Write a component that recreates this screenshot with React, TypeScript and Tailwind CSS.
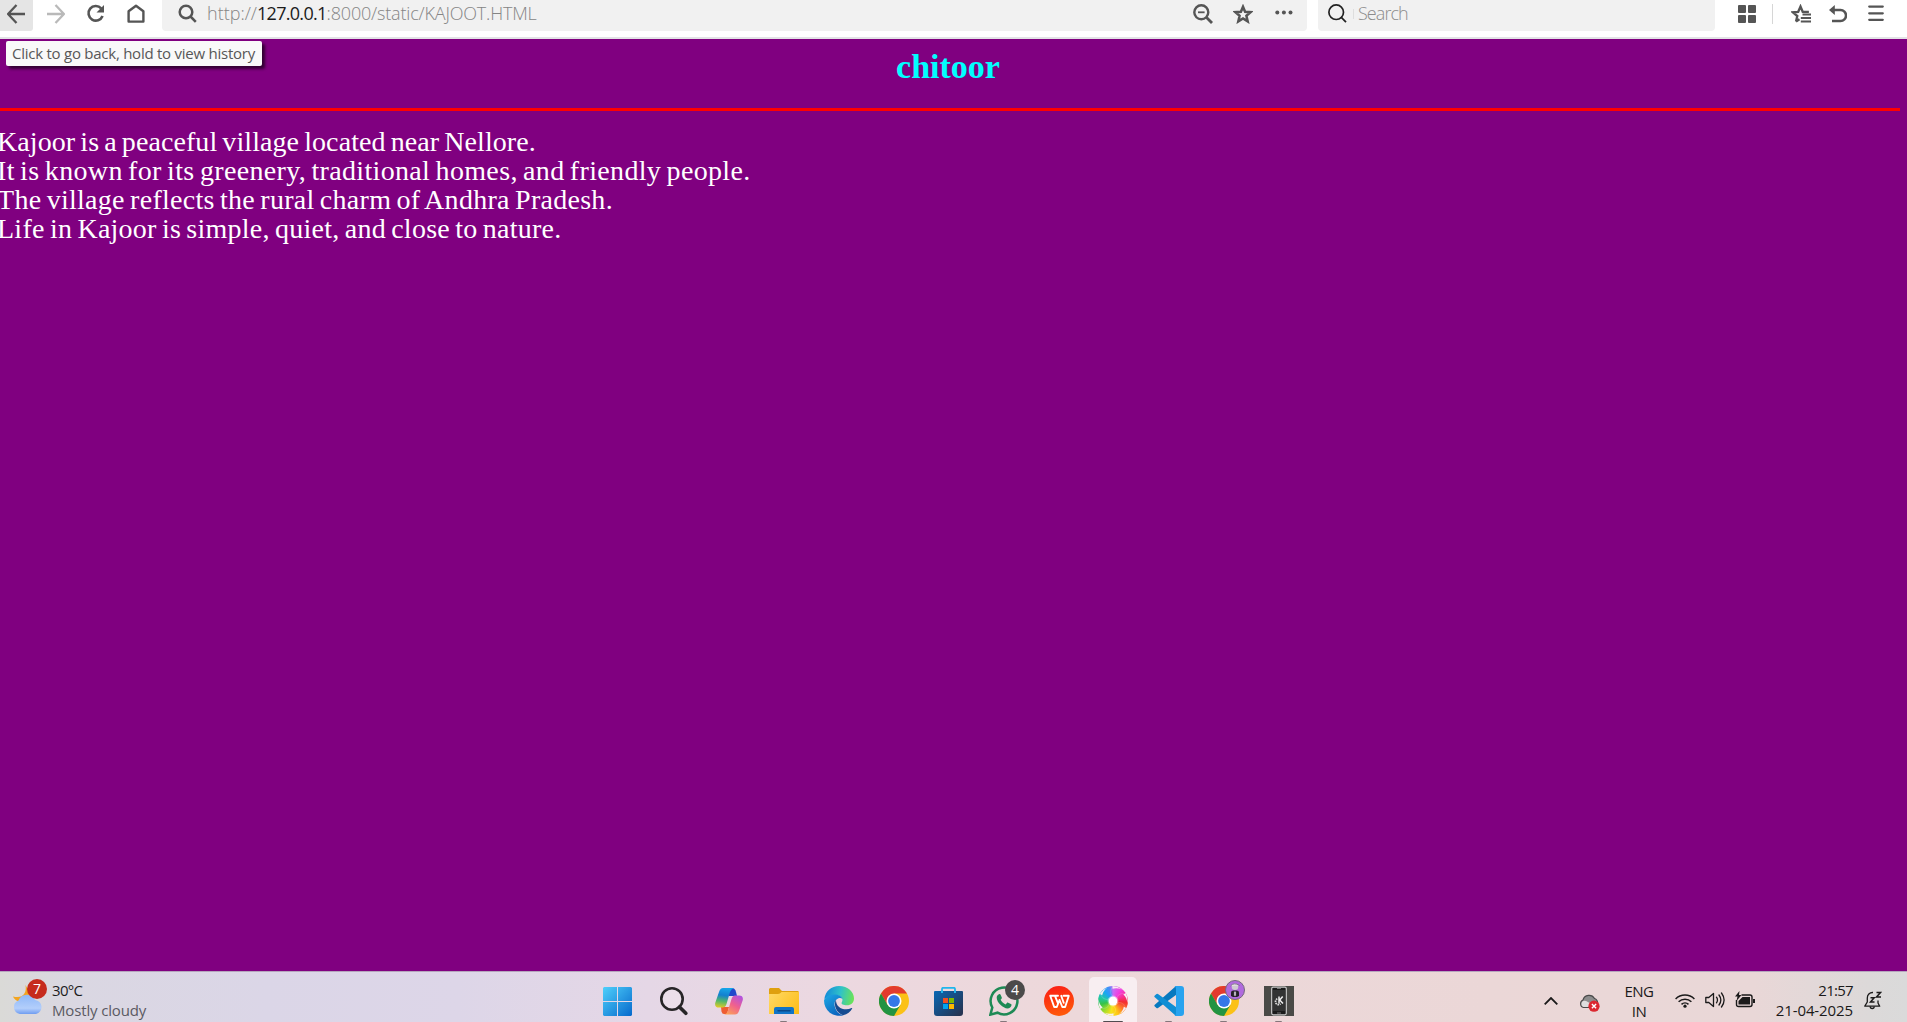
import type { ReactNode } from "react";

const line = { fill: "none", stroke: "currentColor" } as const;

function BackArrow({ className }: { className: string }) {
  return (
    <svg viewBox="0 0 18 20" className={className} {...line} strokeWidth="2.3">
      <path d="M9.5 1 1 10l8.5 9M1 10h17" />
    </svg>
  );
}

function Toolbar() {
  return (
    <div className="flex h-[37px] items-start bg-white text-[#555]">
      <div className="h-[31px] w-[33px] shrink-0 rounded-br-[3px] bg-[#e5e5e5] pl-[7px] pt-[4px]">
        <BackArrow className="h-5 w-[18px]" />
      </div>
      <BackArrow className="ml-[14px] mt-[4px] h-5 w-[18px] shrink-0 rotate-180 text-[#b9b9b9]" />
      <svg viewBox="0 0 19 19" className="ml-[21px] mt-[4px] h-[19px] w-[19px] shrink-0" {...line} strokeWidth="2.6">
        <path d="M15.2 4.3A7.3 7.3 0 1 0 16.6 12" />
        <path d="M18 1v7.5h-7.5z" fill="currentColor" stroke="none" />
      </svg>
      <svg viewBox="0 0 18 19" className="ml-[22px] mt-[4px] h-[19px] w-[18px] shrink-0" {...line} strokeWidth="2.4" strokeLinejoin="round">
        <path d="M1.6 7.3 9 1.8l7.4 5.5v10.3H1.6z" />
      </svg>
      <div className="ml-[17px] flex h-[31px] w-[1145px] shrink-0 items-start rounded-b-[4px] bg-[#f1f1f1] pl-4">
        <svg viewBox="0 0 19 19" className="mt-[4px] h-[19px] w-[19px] shrink-0" {...line} strokeWidth="2.5">
          <circle cx="8" cy="8" r="6.3" />
          <path d="m12.5 12.5 5.3 5.3" />
        </svg>
        <div className="ml-[10px] flex text-[18px] leading-[26px] text-[#858585]">
          <span className="font-light">http://</span>
          <span className="tracking-[-0.7px] text-[#1c1c1c]">127.0.0.1</span>
          <span className="font-light tracking-[-0.18px]">:8000/static/KAJOOT.HTML</span>
        </div>
        <div className="ml-auto mr-[13px] mt-[4px] flex gap-5">
          <svg viewBox="0 0 20 20" className="h-5 w-5" {...line} strokeWidth="2.4">
            <circle cx="8.3" cy="8.3" r="7" />
            <path d="m13.3 13.3 5.7 5.7" strokeWidth="2.8" />
            <path d="M5 8.3h6.6" strokeWidth="1.8" />
          </svg>
          <svg viewBox="0 0 20 20" className="h-5 w-5" {...line} strokeWidth="2.5">
            <path d="m10 2.8 2.100 5 5.500.4-4.200 3.600 1.300 5.600-4.700-3-4.700 3 1.300-5.600-4.200-3.600 5.500-.4z" />
          </svg>
          <svg viewBox="0 0 20 20" className="ml-px h-5 w-5" fill="currentColor">
            <circle cx="3.3" cy="8.5" r="2" />
            <circle cx="9.9" cy="8.5" r="2" />
            <circle cx="16.5" cy="8.5" r="2" />
          </svg>
        </div>
      </div>
      <div className="ml-[11px] flex h-[31px] w-[397px] shrink-0 items-start rounded-b-[4px] bg-[#f1f1f1] pl-[10px]">
        <svg viewBox="0 0 19 19" className="mt-[4px] h-[19px] w-[19px] text-[#222]" {...line} strokeWidth="1.7">
          <circle cx="8.2" cy="8.2" r="7.3" />
          <path d="m13.3 13.3 4.7 4.9" />
        </svg>
        <div className="ml-[6px] mt-[9px] h-2.5 w-px bg-[#dedede]" />
        <span className="ml-[4px] text-[18px] font-light leading-[26px] tracking-[-0.95px] text-[#8c8c8c]">Search</span>
      </div>
      <svg viewBox="0 0 18 18" className="ml-[22.5px] mt-[5px] h-[18px] w-[18px] shrink-0" fill="currentColor">
        <rect width="8" height="8" rx="1" />
        <rect x="10" width="8" height="8" rx="1" />
        <rect y="10" width="8" height="8" rx="1" />
        <rect x="10" y="10" width="8" height="8" rx="1" />
      </svg>
      <div className="ml-4 mt-[4px] h-5 w-px shrink-0 bg-[#d6d6d6]" />
      <svg viewBox="0 0 20 20" className="ml-[18px] mt-[4px] h-5 w-5 shrink-0" {...line} strokeWidth="2.3">
        <path d="M5 17.500 6.300 12 1.800 8.300l5.400-.5L9.500 2.500l2.200 5.300h6.200M5 17.500l3.500-2.300" />
        <path d="M11.5 10.600H20M9.800 14H20M9.800 17.400H20" strokeWidth="2" />
      </svg>
      <svg viewBox="0 0 18 18" className="ml-[18px] mt-[5px] h-[18px] w-[18px] shrink-0" {...line} strokeWidth="2.5">
        <path d="M4 5h7.5a5.400 5.400 0 0 1 0 11H3" />
        <path d="M5.800 0v10L0 5z" fill="currentColor" stroke="none" />
      </svg>
      <svg viewBox="0 0 16 16" className="ml-[21px] mt-[5px] h-4 w-4 shrink-0" {...line} strokeWidth="2.2" strokeLinecap="round">
        <path d="M1.200 1.600h13.600M1.200 8.300h13.600M1.200 14.800h13.600" />
      </svg>
    </div>
  );
}

function ChromeLogo() {
  return (
    <svg viewBox="0 0 30 30" className="h-[30px] w-[30px]">
      <circle cx="15" cy="15" r="15" fill="#fbc116" />
      <path d="M15 15V7.500h13A15 15 0 0 0 2 7.500l6.500 11.250z" fill="#e33b2e" />
      <path d="M2 7.500 8.500 18.750 15 22 21.500 18.750 15 30A15 15 0 0 1 2 7.500z" fill="#229342" />
      <circle cx="15" cy="15" r="7.5" fill="#fff" />
      <circle cx="15" cy="15" r="5.9" fill="#3577e8" />
    </svg>
  );
}

function StartLogo() {
  return (
    <svg viewBox="0 0 29 29" className="h-[29px] w-[29px]">
      <defs>
        <linearGradient id="start" x1="0" y1="0" x2="29" y2="29" gradientUnits="userSpaceOnUse">
          <stop stopColor="#4fd0fb" />
          <stop offset="1" stopColor="#0669cc" />
        </linearGradient>
      </defs>
      <path d="M1 0h13v14H0V1zM15 0h13l1 1v13H15zM0 15h14v14H1l-1-1zM15 15h14v13l-1 1H15z" fill="url(#start)" />
    </svg>
  );
}

function CopilotLogo() {
  return (
    <svg viewBox="0 0 28 27" className="h-[27px] w-[28px]">
      <defs>
        <linearGradient id="copA" x1="8" y1="0" x2="5" y2="20" gradientUnits="userSpaceOnUse">
          <stop stopColor="#16a5e8" />
          <stop offset=".35" stopColor="#1380cf" />
          <stop offset=".65" stopColor="#52b76b" />
          <stop offset="1" stopColor="#e9cd20" />
        </linearGradient>
        <linearGradient id="copB" x1="25" y1="7" x2="13" y2="27" gradientUnits="userSpaceOnUse">
          <stop stopColor="#ae52e4" />
          <stop offset=".5" stopColor="#f0608e" />
          <stop offset="1" stopColor="#fca454" />
        </linearGradient>
      </defs>
      <path d="M14 0h3q3 0 4 4l1 4h-8z" fill="#2147cc" />
      <path d="M6 19h8l-2 7H9q-2 0-2.500-2.500z" fill="#ee5d32" />
      <path d="M8 0h11q-3 1-4 4l-3.500 12q-1 3.500-4 3.500H4Q-.5 19.500.2 15L4 4Q5.200 0 8 0Z" fill="url(#copA)" />
      <path d="M20 7.500h4q4.500 0 3.800 4.500L24 23q-1.200 3.500-4 3.500H9q3-.5 4-4l3.500-11.500q1-3.500 3.500-3.500Z" fill="url(#copB)" />
    </svg>
  );
}

function FolderLogo() {
  return (
    <svg viewBox="0 0 30 27" className="h-[27px] w-[30px]">
      <defs>
        <linearGradient id="folder" x1="0" y1="4" x2="30" y2="27" gradientUnits="userSpaceOnUse">
          <stop stopColor="#ffd966" />
          <stop offset="1" stopColor="#fdbc13" />
        </linearGradient>
      </defs>
      <path d="M1 0h9l3 3h16l1 1v6H0V1z" fill="#dfa00e" />
      <path d="M0 6h9q2 0 3.500-2H30v22H0z" fill="url(#folder)" />
      <path d="M5 26v-5q0-2 2-2h16q2 0 2 2v5z" fill="#1174c7" />
      <path d="M9 22.700h12" stroke="#09498a" strokeWidth="1.4" strokeLinecap="round" />
    </svg>
  );
}

function EdgeLogo() {
  return (
    <svg viewBox="0 0 30 30" className="h-[30px] w-[30px]">
      <defs>
        <linearGradient id="edgeTop" x1="2" y1="8" x2="29" y2="14" gradientUnits="userSpaceOnUse">
          <stop stopColor="#168fd8" />
          <stop offset=".5" stopColor="#30c2c8" />
          <stop offset="1" stopColor="#6be357" />
        </linearGradient>
        <linearGradient id="edgeLow" x1="4" y1="10" x2="16" y2="28" gradientUnits="userSpaceOnUse">
          <stop stopColor="#1ba0e0" />
          <stop offset="1" stopColor="#0b62bd" />
        </linearGradient>
      </defs>
      <path d="M.3 13C1.500 5 7.500 0 15 0c9 0 15 6 15 12.500 0 4-3 6.800-7 6.800-3.800 0-5.800-1.300-5.400-2.600 2.400-3.700-.3-7.500-5-7.500-5 0-9.500 1.300-12.300 3.800Z" fill="url(#edgeTop)" />
      <path d="M.1 14C2 10 6 8.400 10 8.400c5 0 8 2 8.500 4.500-1-.9-2.500-1.200-4-.7-3 1-4.500 4-3.800 7.800.9 4.800 4.300 8.500 8.800 9.200A15 15 0 0 1 .1 14Z" fill="url(#edgeLow)" />
      <path d="M12 13.500c-2.800 5.800.2 13.300 7 15.700 4.500-1 7.500-3.500 9.200-6.700.2-.5-.1-.8-.6-.5C21 25.500 11.500 22 12 13.500Z" fill="#164b91" />
    </svg>
  );
}

function StoreLogo() {
  return (
    <svg viewBox="0 0 29 29" className="h-[29px] w-[29px]">
      <defs>
        <linearGradient id="store" x1="0" y1="4" x2="24" y2="29" gradientUnits="userSpaceOnUse">
          <stop stopColor="#0967b4" />
          <stop offset="1" stopColor="#263553" />
        </linearGradient>
      </defs>
      <path d="M8 6V2q0-1.200 1.200-1.200h10.600Q21 .8 21 2v4" fill="none" stroke="#20b6ec" strokeWidth="1.8" />
      <path d="M0 5q0-1 1-1h27q1 0 1 1v21q0 3-3 3H3q-3 0-3-3z" fill="url(#store)" />
      <path d="M7 6V4h2v2zM20 6V4h2v2z" fill="#20b6ec" />
      <path d="M9 11h5v5H9z" fill="#f25022" />
      <path d="M15 11h5v5h-5z" fill="#7fba00" />
      <path d="M9 17h5v5H9z" fill="#00a4ef" />
      <path d="M15 17h5v5h-5z" fill="#ffb900" />
    </svg>
  );
}

function WhatsAppLogo() {
  return (
    <svg viewBox="0 0 30 30" className="h-[30px] w-[30px]" fill="none">
      <path d="M1.400 28.600 3.300 21.500A13.400 13.400 0 1 1 8.500 26.700Z" stroke="#1e8a55" strokeWidth="2.5" />
      <path d="M10 8.200c.6-.3 1.300-.2 1.600.5l1.200 2.800c.2.600 0 1-.5 1.500l-.7.8c1.200 2.200 2.700 3.600 5 4.700l1.300-1.500c.4-.5.800-.5 1.300-.3l2.700 1.300c.6.300.7.600.6 1.200-.3 2-2 3.200-4 3.200-4.500-.2-10.700-6-10.800-10.700 0-1.700 1-3 2.300-3.500Z" fill="#1e8a55" />
    </svg>
  );
}

function WpsLogo() {
  return (
    <svg viewBox="0 0 30 30" className="h-[30px] w-[30px]" fill="none">
      <defs>
        <linearGradient id="wps" x1="10" y1="0" x2="18" y2="30" gradientUnits="userSpaceOnUse">
          <stop stopColor="#fb2015" />
          <stop offset="1" stopColor="#ff5a08" />
        </linearGradient>
      </defs>
      <circle cx="15" cy="15" r="15" fill="url(#wps)" />
      <path
        d="M14 9.800H6.200l4 11.200h2.600l2.700-7M11 9.800l3 7.500M15.500 14l2.800 7h2.800l3.700-11.200h-5.300M17.200 9.800l2.500 7"
        stroke="#fff"
        strokeWidth="1.9"
        strokeLinejoin="round"
        strokeLinecap="round"
      />
    </svg>
  );
}

const ARMS = [0, 60, 120, 180, 240, 300];

function SwirlLogo() {
  return (
    <div className="relative h-[30px] w-[30px]">
      <div className="h-[30px] w-[30px] rounded-full bg-[conic-gradient(from_0deg,#c86cf5,#f23fe0_35deg,#f7309a_65deg,#f32d30_95deg,#ff7a2a_130deg,#ffc814_160deg,#f6e21b_190deg,#a5dc2a_220deg,#35c24a_255deg,#22c7a5_285deg,#1ba5f5_320deg,#4b8cf7_345deg,#c86cf5)]" />
      <svg viewBox="0 0 30 30" className="absolute inset-0 h-[30px] w-[30px]">
        {ARMS.map((turn) => (
          <g key={turn} transform={`rotate(${turn} 15 15)`}>
            <path d="M14.500 0Q20 .3 24 3.500 18.500 1.200 14.500 2.800Z" fill="#f8eef1" />
            <path d="M15 10.500Q10.500 7.500 14 1.500" fill="none" stroke="#fff" strokeOpacity=".15" strokeWidth="1" />
          </g>
        ))}
        <circle cx="15" cy="15" r="4.5" fill="#fff" />
        <circle cx="15" cy="15" r="5" fill="none" stroke="#fff" strokeOpacity=".35" />
      </svg>
    </div>
  );
}

function CodeLogo() {
  return (
    <svg viewBox="0 0 30 30" className="h-[30px] w-[30px]">
      <path d="M22 0 .8 18.700q-1 .9 0 1.800l1.700 1.500q.7.600 1.500 0L24 7.500z" fill="#0779bf" />
      <path d="M22 30 .8 11.300q-1-.9 0-1.800L2.500 8q.7-.6 1.500 0L24 22.500z" fill="#108ed4" />
      <path d="M20.500 0H27q3 0 3 3v24q0 3-3 3h-6.500q1.500-1 1.500-3V3q0-2-1.500-3Z" fill="#28a3ef" />
    </svg>
  );
}

function PhoneLogo() {
  return (
    <svg viewBox="0 0 30 30" className="h-[30px] w-[30px]">
      <path d="M0 0h30v30H0z" fill="#4a4a47" />
      <rect x="7.7" y="1.2" width="14.6" height="27.6" rx="1.5" fill="#1a1b1b" stroke="#c9c9c9" strokeWidth="1.2" />
      <path d="M9 4h12v21H9z" fill="#323333" />
      <path d="M13 2.500h4M13 27h4" stroke="#777" />
      <path d="M15 10.500v7M18.700 10.500l-3 3.500 3.300 3.500" fill="none" stroke="#eee" strokeWidth="1.5" />
      <path d="M13.300 12.800a3 3 0 1 0 3.200 5" fill="none" stroke="#ddd" strokeWidth="1.8" strokeDasharray="1.500 .8" />
    </svg>
  );
}

function Task({ children, mark, active }: { children: ReactNode; mark?: boolean; active?: boolean }) {
  return (
    <div className="relative flex w-[55px] shrink-0 justify-center pt-[5px]">
      <div className={active ? "flex h-[46px] w-12 items-start justify-center rounded-t-[5px] bg-[#f8eef1] pt-[9px]" : "flex h-[46px] w-12 items-start justify-center pt-[9px]"}>
        {children}
      </div>
      {mark && <div className={active ? "absolute bottom-0 h-px w-5 rounded-t bg-[#514b50]" : "absolute bottom-0 h-px w-[7px] rounded-t bg-[#85777c]"} />}
    </div>
  );
}

function Weather() {
  return (
    <div className="flex w-[590.5px] shrink-0 pl-[13px]">
      <div className="relative w-[39px] shrink-0">
        <svg viewBox="0 0 30 30" className="mt-[13px] h-[30px] w-[30px]">
          <defs>
            <linearGradient id="cloud" x1="0" y1="10" x2="0" y2="29" gradientUnits="userSpaceOnUse">
              <stop stopColor="#8fb9f8" />
              <stop offset=".7" stopColor="#b3cefb" />
              <stop offset="1" stopColor="#6f9df0" />
            </linearGradient>
          </defs>
          <path d="M12.500 0C14 8 10 14 0 11.500 2 16 8 18 12 16l6-6z" fill="#f3a41f" />
          <path d="M7 29a7 7 0 0 1-1.500-13.500A9 9 0 0 1 22 15a7.100 7.100 0 0 1 1 14z" fill="url(#cloud)" />
        </svg>
        <div className="absolute left-[14px] top-[7px] flex h-5 w-5 items-center justify-center rounded-full bg-[#c62b1d] text-[14px] leading-none text-white">7</div>
      </div>
      <div className="pt-[8px] text-[15px] leading-5">
        <div className="tracking-[-0.7px] text-[#1c1c1e]">30°C</div>
        <div className="tracking-[-0.15px] text-[#5b5a62]">Mostly cloudy</div>
      </div>
    </div>
  );
}

function Tray() {
  return (
    <div className="ml-auto flex shrink-0 pr-[25px] text-[#1b1a1a]">
      <svg viewBox="0 0 14 8" className="mr-[21px] mt-[25px] h-2 w-[14px]" {...line} strokeWidth="1.8">
        <path d="m.7 7.300 6.300-6.300 6.300 6.300" />
      </svg>
      <svg viewBox="0 0 21 18" className="mr-6 mt-[22px] h-[18px] w-[21px]">
        <path d="M4.500 13.500A4 4 0 0 1 4 6a6.300 6.300 0 0 1 11.500-1.500 4.600 4.600 0 0 1 3 4.500l-4 4.500z" fill="#8d8d8d" stroke="#4a4a4a" strokeWidth="1.2" />
        <path d="M4.500 13A3.300 3.300 0 0 1 4.500 6.800C8 6 9 9.500 12.500 8.500L10 13z" fill="#dedede" />
        <circle cx="15" cy="12.2" r="5.6" fill="#dc2830" />
        <path d="m12.900 10.100 4.200 4.200m0-4.200-4.200 4.200" stroke="#fff" strokeWidth="1.4" />
      </svg>
      <div className="mr-[21px] w-[30px] pt-[9px] text-center text-[15px] leading-5 tracking-[-0.5px]">
        <div>ENG</div>
        <div>IN</div>
      </div>
      <svg viewBox="0 0 20 15" className="mr-[10px] mt-[21px] h-[15px] w-5" {...line} strokeWidth="1.5">
        <path d="M.6 6a13.200 13.200 0 0 1 18.800 0M3.600 8.800a9 9 0 0 1 12.800 0M6.500 11.400a5 5 0 0 1 7 0" />
        <circle cx="10" cy="13.2" r="1.6" fill="currentColor" stroke="none" />
      </svg>
      <svg viewBox="0 0 20 16" className="mr-[10px] mt-[20px] h-4 w-5" {...line} strokeWidth="1.3" strokeLinejoin="round" strokeLinecap="round">
        <path d="M.8 5.500h3L8.500 1.500v13l-4.700-4h-3zM11.500 5.200q2 2.800 0 5.600M14 3q3.700 5 0 10M16.500 1q5.200 7 0 14" />
      </svg>
      <svg viewBox="0 0 20 17" className="mr-[19px] mt-[19px] h-[17px] w-5" {...line} strokeWidth="1.4">
        <path d="M6.500 4H15q2 0 2 2v7.500q0 2-2 2H3.500q-2 0-2-2V9" />
        <path d="M7.500 6H15v7.500H3.500V10z" fill="currentColor" stroke="none" />
        <path d="M18 8v4h2V8z" fill="currentColor" stroke="none" />
        <path d="M4.500 0 0 5.500h2.500L1.500 10 6.500 4H4z" fill="currentColor" stroke="none" />
      </svg>
      <div className="mr-[11px] w-[79px] pt-[8px] text-right text-[15px] leading-5">
        <div className="tracking-[-0.7px]">21:57</div>
        <div className="tracking-[-0.1px]">21-04-2025</div>
      </div>
      <svg viewBox="0 0 18 19" className="mt-[19px] h-[19px] w-[18px]" {...line} strokeWidth="1.3">
        <path d="M9 1.500C5.500 1.300 3.300 4 3.300 7v4L.8 15.200h14.900l-1.700-3.200V9.500" strokeLinejoin="round" />
        <path d="M6.200 15.500a2 2 0 0 0 4 0" />
        <path d="M6.500 6.800h3.700L6.500 11h4M12.500 1.500h4l-4 4.500H17" strokeWidth="1.5" />
      </svg>
    </div>
  );
}

function Taskbar() {
  return (
    <div className="flex h-[51px] overflow-hidden border-t border-[#b5a6bd] bg-[linear-gradient(90deg,#dadad7_0%,#dad7e2_4%,#dbd6e7_14%,#ddd6e8_24%,#e5d7e6_34%,#ecd8e0_44%,#edd8da_56%,#ebd7d7_78%,#e9d7d7_92%,#dcd9d9_98%,#dadada_100%)]">
      <Weather />
      <Task><div className="mr-px mt-px"><StartLogo /></div></Task>
      <Task>
        <svg viewBox="0 0 28 29" className="ml-px mt-px h-[29px] w-7" {...line} stroke="#272527">
          <circle cx="12" cy="12" r="10.7" strokeWidth="2.6" fill="#f1e8f0" fillOpacity=".5" />
          <path d="m19.500 20 6.300 6.300" strokeWidth="3.6" strokeLinecap="round" />
        </svg>
      </Task>
      <Task><div className="ml-px mt-0.5"><CopilotLogo /></div></Task>
      <Task mark><div className="ml-px mt-0.5"><FolderLogo /></div></Task>
      <Task><div className="ml-px"><EdgeLogo /></div></Task>
      <Task><div className="ml-px"><ChromeLogo /></div></Task>
      <Task><div className="mt-px"><StoreLogo /></div></Task>
      <Task mark>
        <div className="ml-px"><WhatsAppLogo /></div>
        <div className="absolute left-[29.5px] top-[8px] flex h-5 w-5 items-center justify-center rounded-full bg-[#4b4a4a] text-[14px] leading-none text-white">4</div>
      </Task>
      <Task><div className="ml-px"><WpsLogo /></div></Task>
      <Task mark active><SwirlLogo /></Task>
      <Task mark><div className="ml-px"><CodeLogo /></div></Task>
      <Task mark>
        <div className="ml-px"><ChromeLogo /></div>
        <svg viewBox="0 0 20 20" className="absolute left-[29.5px] top-[8px] h-5 w-5">
          <circle cx="10" cy="10" r="9.5" fill="#b06ade" stroke="#75697d" />
          <path d="M6 16v-3.500q0-2 2.500-2h3q2.500 0 2.500 2V16l-2 1H8z" fill="#252128" />
          <circle cx="10" cy="6.800" r="3.3" fill="#cfcad1" />
          <path d="M5.500 6Q9 2 14.500 5.500M9 11.500h2v4.500H9z" fill="#e7dfe8" stroke="#4e4855" strokeWidth=".6" />
        </svg>
      </Task>
      <Task mark><div className="ml-px"><PhoneLogo /></div></Task>
      <Tray />
    </div>
  );
}

export default function App() {
  return (
    <div className="flex h-[1022px] w-[1907px] flex-col overflow-hidden bg-[#800080] font-['Open_Sans',sans-serif]">
      <div className="relative shrink-0 border-b-2 border-[#e3e3e6]">
        <Toolbar />
        <div className="absolute left-[6px] top-[41px] z-10 h-[25px] w-[256px] whitespace-nowrap rounded-[2px] bg-[#f9f9f9] pl-[6px] pt-px text-[15px] leading-[22px] tracking-[-0.25px] text-[#575757] shadow-[3px_3px_3px_rgba(0,0,0,0.6)]">
          Click to go back, hold to view history
        </div>
      </div>
      <main className="min-h-0 flex-1">
        <div className="w-[1900px]">
          <h1 className="pr-[4px] pt-[8px] text-center font-['Liberation_Serif',serif] text-[34px] font-bold leading-[39px] text-[#00ffff]">chitoor</h1>
          <hr className="mt-[22px] h-[3px] border-0 bg-[#ff0000]" />
          <div className="-ml-[3px] mt-[16px] whitespace-nowrap font-['Liberation_Serif',serif] text-[28px] leading-[29px] text-white [word-spacing:-2px]">
            <p className="tracking-[0.08px]">Kajoor is a peaceful village located near Nellore.</p>
            <p className="tracking-[0.34px]">It is known for its greenery, traditional homes, and friendly people.</p>
            <p className="tracking-[0.28px]">The village reflects the rural charm of Andhra Pradesh.</p>
            <p className="tracking-[0.25px]">Life in Kajoor is simple, quiet, and close to nature.</p>
          </div>
        </div>
      </main>
      <Taskbar />
    </div>
  );
}
